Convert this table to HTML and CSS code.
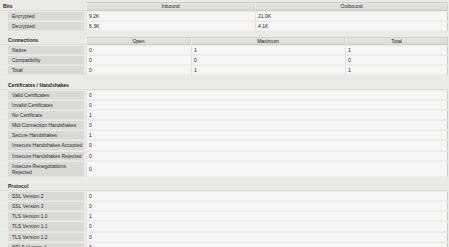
FILE: index.html
```html
<!DOCTYPE HTML>
<html lang="en">

<head>
    <meta charset="utf-8">
    <title>SSL Statistics</title>

    <link rel="stylesheet" href="styles.css">
</head>

<body>

    <table class="stats first">
        <tr>
            <th class="sect">Bits</th>
            <th class="col c-in">Inbound</th>
            <th class="col">Outbound</th>
        </tr>
        <tr><td class="label">Encrypted</td><td>9.2K</td><td>21.0K</td></tr>
        <tr><td class="label">Decrypted</td><td>6.3K</td><td>4.1K</td></tr>
    </table>

    <table class="stats">
        <tr>
            <th class="sect">Connections</th>
            <th class="col c-open">Open</th>
            <th class="col c-max">Maximum</th>
            <th class="col">Total</th>
        </tr>
        <tr><td class="label">Native</td><td>0</td><td>1</td><td>1</td></tr>
        <tr><td class="label">Compatibility</td><td>0</td><td>0</td><td>0</td></tr>
        <tr><td class="label">Total</td><td>0</td><td>1</td><td>1</td></tr>
    </table>

    <table class="stats">
        <tr>
            <th class="sect">Certificates / Handshakes</th>
            <th class="blank"></th>
        </tr>
        <tr><td class="label">Valid Certificates</td><td>0</td></tr>
        <tr><td class="label">Invalid Certificates</td><td>0</td></tr>
        <tr><td class="label">No Certificate</td><td>1</td></tr>
        <tr><td class="label">Mid-Connection Handshakes</td><td>0</td></tr>
        <tr><td class="label">Secure Handshakes</td><td>1</td></tr>
        <tr><td class="label">Insecure Handshakes Accepted</td><td>0</td></tr>
        <tr><td class="label">Insecure Handshakes Rejected</td><td>0</td></tr>
        <tr><td class="label wrap">Insecure Renegotiations<br>Rejected</td><td>0</td></tr>
    </table>

    <table class="stats">
        <tr>
            <th class="sect">Protocol</th>
            <th class="blank"></th>
        </tr>
        <tr><td class="label">SSL Version 2</td><td>0</td></tr>
        <tr><td class="label">SSL Version 3</td><td>0</td></tr>
        <tr><td class="label">TLS Version 1.0</td><td>1</td></tr>
        <tr><td class="label">TLS Version 1.1</td><td>0</td></tr>
        <tr><td class="label">TLS Version 1.2</td><td>0</td></tr>
        <tr><td class="label">DTLS Version 1</td><td>0</td></tr>
    </table>

</body>

</html>
```

FILE: styles.css
```css
*{
    box-sizing: border-box;
    padding: 0;
    margin: 0;
}

body{
    background-color: #ebeae7;
    font-family: "Liberation Sans", Arial, sans-serif;
    font-size: 5px;
    color: #222;
    padding-top: 1px;
}

.stats{
    width: 448px;
    border-collapse: separate;
    border-spacing: 0 1px;
    margin-bottom: 4px;
    table-layout: fixed;
}

.stats th{
    height: 8.5px;
    font-weight: normal;
    color: #1a1a1a;
    vertical-align: middle;
}

.sect{
    width: 86px;
    text-align: left;
    padding-left: 8px;
    font-weight: bold !important;
    white-space: nowrap;
    border-bottom: 1px solid #dddcd9;
}

.first .sect{
    padding-left: 3px;
}

.col{
    text-align: center;
    background: linear-gradient(#e6e5e2, #dad9d6);
    border: 1px solid #cfceca;
    border-left-color: #f2f1ef;
}

.blank{
    border-bottom: 1px solid #dddcd9;
}

.c-in{
    width: 169px;
}

.c-open{
    width: 105px;
}

.c-max{
    width: 154px;
}

.stats td{
    height: 9.1px;
    padding-left: 2px;
    background-color: #f7f6f4;
    border-bottom: 1px solid #eeedea;
    border-left: 1px solid #e2e1de;
    white-space: nowrap;
    vertical-align: middle;
}

.stats td:last-child{
    border-right: 1px solid #c9c8c5;
}

.stats .label{
    padding-left: 4px;
    background-color: #dad9d6;
    background-clip: padding-box;
    border-left: 8px solid #ebeae7;
    border-right: 2px solid #ebeae7;
    border-bottom: 1px solid #e4e3e0;
    color: #2a2a2a;
}

.stats .wrap{
    line-height: 6px;
    padding-top: 1px;
    padding-bottom: 1px;
}
```
